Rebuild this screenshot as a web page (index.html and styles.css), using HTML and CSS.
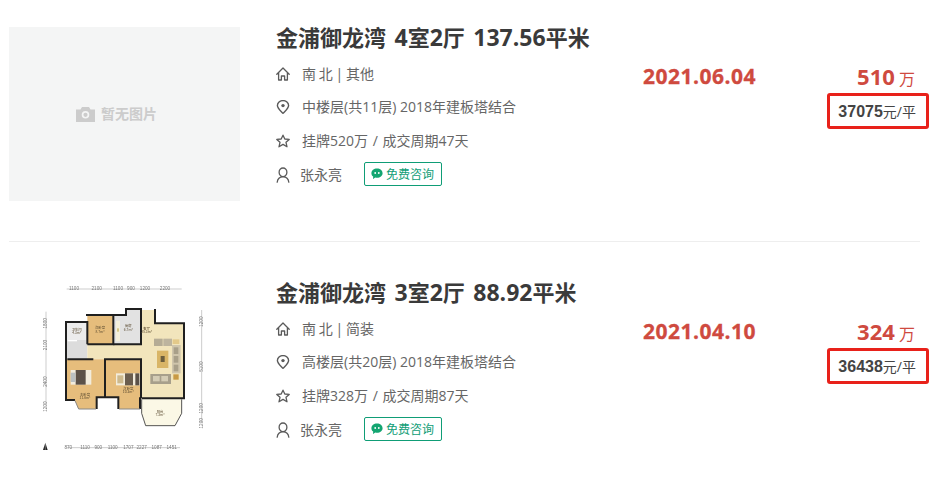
FILE: index.html
```html
<!DOCTYPE html>
<html lang="zh-CN">
<head>
<meta charset="utf-8">
<title>成交记录</title>
<link rel="stylesheet" href="styles.css">
</head>
<body>
<svg class="defs" width="0" height="0" aria-hidden="true">
  <defs>
    <symbol id="i-home" viewBox="0 0 14 14"><path d="M.8 7.200 7 1 13.200 7.200M2.600 5.800V13H5.400V9H8.600V13H11.400V5.800" fill="none" stroke="currentColor" stroke-width="1.300" stroke-linejoin="round" stroke-linecap="round"/></symbol>
    <symbol id="i-pin" viewBox="0 0 14 14"><path d="M7 13.400C4.600 10.800 1.400 8.400 1.400 5.600A5.600 5 0 0 1 12.600 5.600C12.600 8.400 9.400 10.800 7 13.400Z" fill="none" stroke="currentColor" stroke-width="1.400" stroke-linejoin="round"/><circle cx="7" cy="5.600" r="1.700" fill="currentColor"/></symbol>
    <symbol id="i-star" viewBox="0 0 14 14"><path d="M7 1.200 8.800 5 13.200 5.400 10 8.300 11 12.800 7 10.400 3 12.800 4 8.300.8 5.400 5.200 5Z" fill="none" stroke="currentColor" stroke-width="1.300" stroke-linejoin="round"/></symbol>
    <symbol id="i-user" viewBox="0 0 14 16"><path d="M7 1A3.800 4.200 0 0 1 7 9.600 3.800 4.200 0 0 1 7 1ZM1.200 15.200C1.600 11.600 4 9.800 7 9.800S12.400 11.600 12.800 15.200" fill="none" stroke="currentColor" stroke-width="1.300" stroke-linecap="round"/></symbol>
    <symbol id="i-chat" viewBox="0 0 12 12"><path d="M6 .6C9.100.6 11.600 2.600 11.600 5.200S9.100 9.800 6 9.800C5.400 9.800 4.800 9.700 4.300 9.600L2 11 2.200 8.600C1 7.800.4 6.600.4 5.200.4 2.600 2.900.6 6 .6Z" fill="currentColor"/><circle cx="4.200" cy="5" r=".9" fill="#fff"/><circle cx="7.800" cy="5" r=".9" fill="#fff"/></symbol>
  </defs>
</svg>

<main class="list">
  <article class="item">
    <div class="thumb thumb-empty">
      <svg class="cam" viewBox="0 0 19 15" width="19" height="15" aria-hidden="true"><path fill-rule="evenodd" d="M0 2.500H4.500L6 0H13L14.500 2.500H19V15H0ZM9.500 4A3.800 3.800 0 1 0 9.500 11.600 3.800 3.800 0 1 0 9.500 4ZM9.500 5.700A2.100 2.100 0 1 1 9.500 9.900 2.100 2.100 0 1 1 9.500 5.700Z" fill="currentColor"/></svg>
      <span>暂无图片</span>
    </div>
    <div class="info">
      <h2 class="title">金浦御龙湾<span class="num"> 4</span>室<span class="num">2</span>厅<span class="num"> 137.56</span>平米</h2>
      <p class="row face"><svg class="ico"><use href="#i-home"/></svg>南 北 | 其他</p>
      <p class="row"><svg class="ico"><use href="#i-pin"/></svg>中楼层(共11层) 2018年建板塔结合</p>
      <p class="row wide"><svg class="ico"><use href="#i-star"/></svg>挂牌520万 / 成交周期47天</p>
      <div class="row agent"><svg class="ico ico-user"><use href="#i-user"/></svg><span class="name">张永亮</span><a class="tag"><svg class="chat"><use href="#i-chat"/></svg>免费咨询</a></div>
    </div>
    <div class="date">2021.06.04</div>
    <div class="price">
      <div class="total"><b>510</b> 万</div>
      <div class="unit"><b>37075</b>元/平<span class="mark"></span></div>
    </div>
  </article>

  <article class="item">
    <div class="thumb">
      <svg class="plan" viewBox="-63 6 693 522" width="231" height="174" aria-hidden="true">
        <g fill="none" stroke="#999" stroke-width="1.500">
          <path d="M110 27H455M110 503H450M48 95V380M515 90V430"/>
        </g>
        <g class="dims">
          <text x="132" y="31">1100</text><text x="200" y="31">2100</text><text x="264" y="31">1100</text><text x="303" y="31">900</text><text x="345" y="31">1200</text><text x="405" y="31">2200</text>
          <text x="115" y="507">870</text><text x="165" y="507">1110</text><text x="205" y="507">900</text><text x="248" y="507">1100</text><text x="295" y="507">1707</text><text x="335" y="507">2227</text><text x="380" y="507">1087</text><text x="425" y="507">1451</text>
          <text transform="translate(52 130) rotate(-90)">1800</text><text transform="translate(52 195) rotate(-90)">2100</text><text transform="translate(52 305) rotate(-90)">2400</text><text transform="translate(52 380) rotate(-90)">1200</text>
          <text transform="translate(519 125) rotate(-90)">1200</text><text transform="translate(519 260) rotate(-90)">5100</text><text transform="translate(519 385) rotate(-90)">1200</text><text transform="translate(519 430) rotate(-90)">1200</text>
        </g>
        <path d="M110 126H172V238H110Z" fill="#dcdcdc"/>
        <path d="M110 126H172V180H110Z" fill="#ececec"/>
        <path d="M172 105H250V193H172Z" fill="#e6bd7c"/>
        <path d="M250 105H288V87H333V193H250Z" fill="#e2e2e2"/>
        <path d="M172 193H333V130H336V90H375V130H462V355H333V238H172Z" fill="#f2e5bc"/>
        <path d="M110 238H225V352H200V387H145L135 362H110Z" fill="#e6bd7c"/>
        <path d="M228 238H333V352H330V387H265V352H228Z" fill="#e6bd7c"/>
        <path d="M335 355H455V400L435 437H347L335 400Z" fill="#fbf8e6"/>
        <rect x="372" y="176" width="26" height="22" fill="#b5ac95"/><rect x="400" y="176" width="26" height="22" fill="#bdb49e"/>
        <rect x="428" y="178" width="20" height="14" fill="#e3c98a"/>
        <rect x="426" y="195" width="26" height="85" fill="#cfc5ac"/><rect x="431" y="202" width="14" height="20" fill="#a89f89"/><rect x="431" y="228" width="14" height="20" fill="#a89f89"/><rect x="431" y="254" width="14" height="20" fill="#a89f89"/>
        <rect x="381" y="212" width="34" height="52" fill="#d9b566"/><rect x="392" y="228" width="12" height="18" fill="#6b5d3d"/>
        <rect x="361" y="282" width="62" height="30" fill="#a79f8b"/><rect x="369" y="288" width="20" height="16" fill="#d4ccb5"/><rect x="394" y="288" width="20" height="16" fill="#d4ccb5"/>
        <rect x="430" y="283" width="16" height="16" fill="#c89a45"/>
        <rect x="122" y="270" width="62" height="44" fill="#f2ecdc"/><rect x="137" y="270" width="30" height="44" fill="#5b5148"/><rect x="122" y="278" width="14" height="28" fill="#b9c0c2"/>
        <rect x="258" y="280" width="72" height="36" fill="#f2ecdc"/><rect x="285" y="280" width="24" height="36" fill="#6a5d4e"/><rect x="316" y="280" width="12" height="36" fill="#5b5148"/><rect x="262" y="286" width="18" height="24" fill="#cdb98d"/>
        <rect x="258" y="122" width="12" height="62" fill="#f5f0dc"/><rect x="262" y="145" width="4" height="10" fill="#c7b45e"/>
        <rect x="113" y="180" width="28" height="4" fill="#fff"/>
        <g fill="none" stroke="#1f1f1f" stroke-width="6" stroke-linejoin="miter">
          <path d="M172 193V126H108V360H135"/>
          <path d="M168 105H250V193H172M225 193H222"/>
          <path d="M250 105H288V87H333V193H250"/>
          <path d="M375 87V130H462V355H335"/>
          <path d="M112 238H190M222 238H333V355"/>
          <path d="M225 238V352H200V387"/>
          <path d="M228 352H265V387M330 352V387"/>
        </g>
        <path d="M135 362 146 387H198M267 387H330" fill="none" stroke="#888" stroke-width="3"/>
        <path d="M335 358V400L347 437H435L455 400V358" fill="none" stroke="#333" stroke-width="2.500"/>
        <g class="rooms">
          <text x="140" y="152">卫生间</text><text x="140" y="162">4.3m²</text>
          <text x="210" y="148">次卧室</text><text x="210" y="158">8.7m²</text>
          <text x="295" y="142">厨房</text><text x="295" y="153">6.7m²</text>
          <text x="350" y="150">客厅</text><text x="350" y="160">25.3m²</text>
          <text x="165" y="348">主卧室</text><text x="165" y="358">11.6m²</text>
          <text x="295" y="330">次卧室</text><text x="295" y="340">10.2m²</text>
          <text x="390" y="398">阳台</text><text x="390" y="408">7.3m²</text>
        </g>
        <path d="M46 488 53 510H39Z" fill="#222"/><path d="M46 488V512" stroke="#fff" stroke-width="1"/>
      </svg>
    </div>
    <div class="info">
      <h2 class="title">金浦御龙湾<span class="num"> 3</span>室<span class="num">2</span>厅<span class="num"> 88.92</span>平米</h2>
      <p class="row face"><svg class="ico"><use href="#i-home"/></svg>南 北 | 简装</p>
      <p class="row"><svg class="ico"><use href="#i-pin"/></svg>高楼层(共20层) 2018年建板塔结合</p>
      <p class="row wide"><svg class="ico"><use href="#i-star"/></svg>挂牌328万 / 成交周期87天</p>
      <div class="row agent"><svg class="ico ico-user"><use href="#i-user"/></svg><span class="name">张永亮</span><a class="tag"><svg class="chat"><use href="#i-chat"/></svg>免费咨询</a></div>
    </div>
    <div class="date">2021.04.10</div>
    <div class="price">
      <div class="total"><b>324</b> 万</div>
      <div class="unit"><b>36438</b>元/平<span class="mark"></span></div>
    </div>
  </article>
</main>
</body>
</html>
```

FILE: styles.css
```css
* { box-sizing: border-box; }
html, body { margin: 0; padding: 0; background: #fff; }
body {
  font-family: "Open Sans", "Noto Sans CJK SC", sans-serif;
  color: #666;
}
.defs { position: absolute; }
.list { width: 920px; padding: 27px 0 0 9px; }
.item {
  display: flex;
  align-items: flex-start;
  padding-bottom: 40px;
  margin-bottom: 40px;
  border-bottom: 1px solid #eee;
}
.item:last-child {
  padding-bottom: 0;
  margin-bottom: 0;
  border-bottom: 0;
}
.thumb {
  flex: none;
  width: 231px;
  height: 174px;
  background: #fff;
}
.thumb-empty {
  background: #f4f5f5;
  color: #ccc;
  display: flex;
  align-items: center;
  justify-content: center;
  gap: 6px;
  font-size: 14px;
  font-weight: 700;
  line-height: 20px;
  padding-right: 16px;
}
.cam { display: block; }
.plan { display: block; filter: blur(.35px); }
.dims text { font: 14px "Liberation Sans", sans-serif; fill: #777; text-anchor: middle; }
.rooms text { font: 10px "Noto Sans CJK SC", sans-serif; fill: #5a4a30; text-anchor: middle; }

.info { flex: none; width: 331px; margin: 0 0 0 36px; }
.title {
  margin: 0 0 15px;
  height: 22px;
  font-size: 22px;
  line-height: 21px;
  font-weight: 700;
  color: #3a3a3a;
  white-space: pre;
}
.num { font-size: 23px; word-spacing: 2.500px; }
.row {
  display: flex;
  align-items: center;
  margin: 0 0 13.400px;
  height: 20px;
  font-size: 14px;
  line-height: 20px;
  color: #666;
  white-space: nowrap;
}
.face { word-spacing: -.9px; }
.wide { word-spacing: 1px; }
.ico {
  flex: none;
  width: 14px;
  height: 14px;
  margin-right: 12px;
  color: #5a5a5a;
}
.agent { margin: 0; }
.ico-user { width: 14px; height: 16px; margin: 2px 10px 0 0; }
.name { flex: none; width: 64px; padding-top: 2px; }
.tag {
  display: flex;
  align-items: center;
  width: 78px;
  height: 24px;
  padding: 1px 0 0 6px;
  border: 1px solid #0f9d76;
  border-radius: 2px;
  color: #0f9d76;
  font-size: 12px;
  line-height: 22px;
}
.chat { width: 12px; height: 12px; margin: -2px 3px 0 0; flex: none; color: #13a571; }

.date {
  flex: none;
  margin: 39px 0 0 36px;
  width: 114px;
  font-size: 21px;
  letter-spacing: .5px;
  line-height: 20px;
  font-weight: 700;
  color: #cf4a3f;
  -webkit-text-stroke: .3px #cf4a3f;
  white-space: nowrap;
}
.price {
  flex: 1;
  margin-top: 39px;
  padding-right: 5px;
  text-align: right;
  color: #cf4a3f;
}
.total { font-size: 16px; line-height: 20px; }
.total b { font-size: 22px; font-weight: 700; }
.unit {
  position: relative;
  margin: 13px -1px 0 0;
  font-size: 14px;
  line-height: 20px;
  color: #444;
}
.unit b { font-family: "Liberation Sans", sans-serif; font-size: 16px; font-weight: 700; }
.mark {
  position: absolute;
  right: -13px;
  top: -9px;
  width: 102px;
  height: 36px;
  border: 3px solid #e8211a;
  border-radius: 3px;
}
```
